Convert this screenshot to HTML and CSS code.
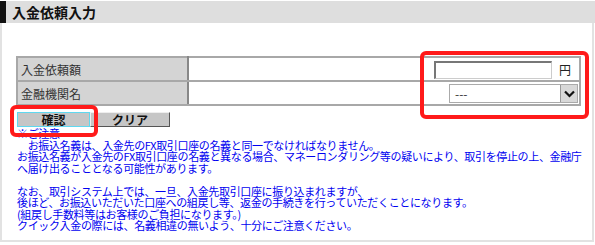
FILE: index.html
```html
<!DOCTYPE html>
<html lang="ja">
<head>
    <meta charset="UTF-8">
    <title>入金依頼入力</title>
    <link rel="stylesheet" href="styles.css">
</head>
<body>
    <div id="page">
        <h1 class="title-bar">入金依頼入力</h1>

        <div class="panel">
            <table class="form-table">
                <tr>
                    <th>入金依頼額</th>
                    <td>
                        <input type="text" class="amount-input">
                        <span class="unit">円</span>
                    </td>
                </tr>
                <tr>
                    <th>金融機関名</th>
                    <td>
                        <div class="select-box">
                            <span class="select-value">---</span>
                            <span class="select-arrow">
                                <svg width="11" height="8" viewBox="0 0 11 8">
                                    <path d="M1 1.5 L5.5 6 L10 1.5" fill="none" stroke="#111" stroke-width="2.2"/>
                                </svg>
                            </span>
                        </div>
                    </td>
                </tr>
            </table>

            <div class="buttons">
                <button class="btn btn-confirm">確認</button>
                <button class="btn">クリア</button>
            </div>

            <div class="notes">
                <p>※ご注意<br>
                　お振込名義は、入金先のFX取引口座の名義と同一でなければなりません。<br>
                お振込名義が入金先のFX取引口座の名義と異なる場合、マネーロンダリング等の疑いにより、取引を停止の上、金融庁<br>
                へ届け出ることとなる可能性があります。</p>
                <p>なお、取引システム上では、一旦、入金先取引口座に振り込まれますが、<br>
                後ほど、お振込いただいた口座への組戻し等、返金の手続きを行っていただくことになります。<br>
                (組戻し手数料等はお客様のご負担になります。)<br>
                クイック入金の際には、名義相違の無いよう、十分にご注意ください。</p>
            </div>

            <!-- red highlight frames -->
            <div class="mark mark-fields"></div>
            <div class="mark mark-confirm"></div>
        </div>
    </div>
</body>
</html>
```

FILE: styles.css
```css
body {
    margin: 0;
    font-family: "Noto Sans CJK JP", "Liberation Sans", sans-serif;
    font-size: 12px;
    color: #222;
    background-color: #fff;
}
#page {
    width: 595px;
    position: relative;
}
.title-bar {
    margin: 1px 0 0 0;
    height: 22px;
    line-height: 22px;
    background-color: #dedede;
    border-left: 6px solid #111;
    padding-left: 6px;
    font-size: 14px;
    font-weight: bold;
    color: #111;
}
.panel {
    height: 219px;
    border: 2px solid #e2e2e2;
    border-top: none;
    padding: 33px 0 0 14px;
    box-sizing: border-box;
    margin-right: 1px;
}
.form-table {
    width: 565px;
    border-collapse: collapse;
}
.form-table th,
.form-table td {
    border-top: 2px solid #a8a8a8;
    border-bottom: 2px solid #a8a8a8;
    padding: 0;
    height: 22px;
}
.form-table th {
    width: 166px;
    background-color: #d4d4d4;
    text-align: left;
    font-weight: normal;
    padding-left: 3px;
    color: #333;
    border-left: 2px solid #a8a8a8;
    border-right: 2px solid #888;
}
.form-table td {
    text-align: right;
    border-right: 2px solid #a8a8a8;
    padding-right: 1px;
}
.amount-input {
    width: 118px;
    height: 18px;
    box-sizing: border-box;
    border: 1px solid #ccc;
    border-top: 2px solid #777;
    border-left: 2px solid #777;
    vertical-align: middle;
    margin: 0;
}
.unit {
    display: inline-block;
    width: 20px;
    text-align: center;
    vertical-align: middle;
    margin-right: 3px;
}
.select-box {
    display: inline-flex;
    align-items: center;
    justify-content: space-between;
    width: 129px;
    height: 19px;
    box-sizing: border-box;
    border: 1px solid #aaa;
    background-color: #fff;
    vertical-align: middle;
    text-align: left;
}
.select-value {
    padding-left: 5px;
    font-size: 12px;
    color: #333;
}
.select-arrow {
    display: flex;
    align-items: center;
    justify-content: center;
    width: 16px;
    height: 17px;
    background-color: #d8d8d8;
    border-left: 1px solid #999;
}
.buttons {
    display: flex;
    margin-top: 6px;
    padding-left: 1px;
}
.btn {
    width: 80px;
    height: 15px;
    padding: 0;
    font-family: inherit;
    font-size: 12px;
    font-weight: bold;
    line-height: 12px;
    color: #111;
    background-color: #c6c6c6;
    border: 1px solid;
    border-color: #eee #555 #555 #eee;
}
.btn-confirm {
    width: 73px;
    border-color: #5fd8f0;
}
.notes {
    color: #0000f0;
    font-size: 11px;
    letter-spacing: -0.35px;
    line-height: 11.5px;
    white-space: nowrap;
    margin-top: 1px;
    padding-left: 1px;
}
.notes p {
    margin: 0 0 11.5px 0;
}
.mark {
    position: absolute;
    border: 4px solid #ff1a1a;
    border-radius: 6px;
    box-sizing: border-box;
}
.mark-fields {
    left: 420px;
    top: 50px;
    width: 169px;
    height: 68px;
}
.mark-confirm {
    left: 10px;
    top: 104px;
    width: 88px;
    height: 32px;
}
```
